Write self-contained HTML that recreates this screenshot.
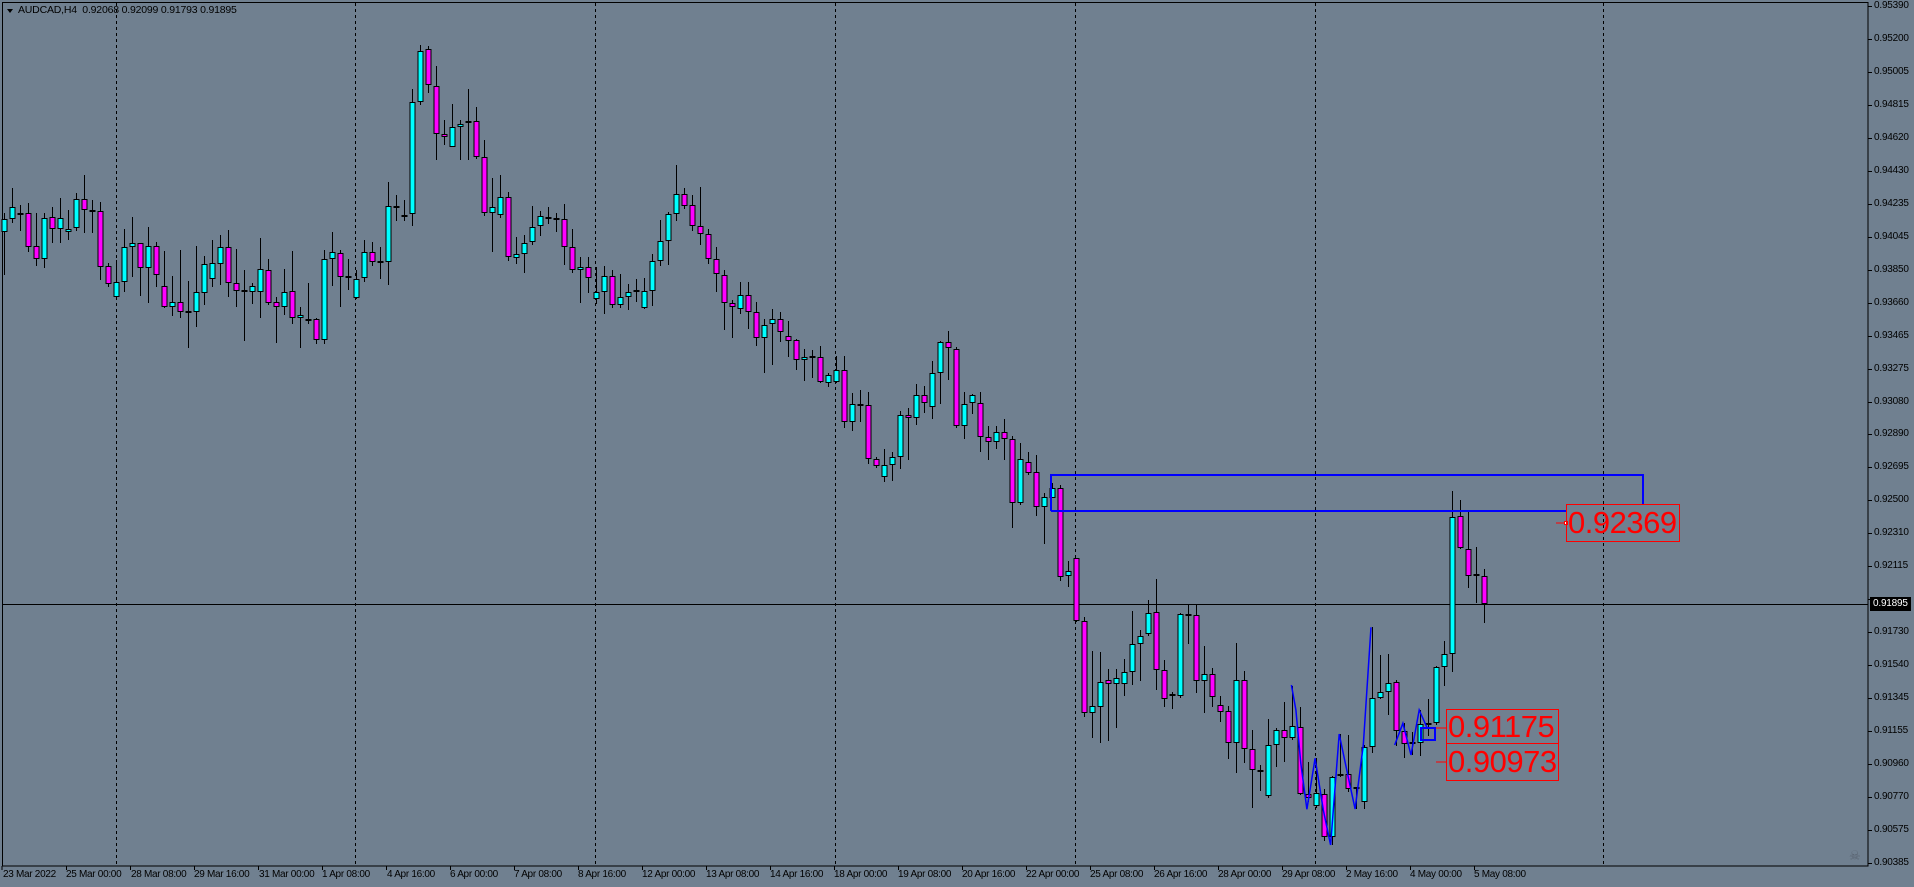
<!DOCTYPE html>
<html><head><meta charset="utf-8">
<style>
html,body{margin:0;padding:0;background:#708090;overflow:hidden}
body{width:1914px;height:887px;position:relative;font-family:"Liberation Sans",sans-serif}
svg{position:absolute;left:0;top:0}
.pl{position:absolute;left:1874px;font-size:10px;letter-spacing:-0.2px;color:#000;line-height:12px}
.tl{position:absolute;top:869px;font-size:10px;letter-spacing:-0.3px;color:#000;white-space:nowrap}
.hdr{position:absolute;left:8px;top:4px;font-size:10.5px;color:#000;white-space:nowrap;letter-spacing:-0.2px}
.box{position:absolute;border:1px solid #f00;color:#f00;font-size:31px;line-height:36px;box-sizing:border-box;letter-spacing:-0.5px;padding-left:1px;white-space:nowrap;overflow:hidden}
</style></head><body>
<svg id="s" width="1914" height="887" xmlns="http://www.w3.org/2000/svg">
<rect x="2.5" y="2.5" width="1865.5" height="863.5" fill="none" stroke="#000" stroke-width="1"/>
<g stroke="#000" stroke-width="1" stroke-dasharray="3,3">
<line x1="116.5" y1="3" x2="116.5" y2="866"/>
<line x1="355.5" y1="3" x2="355.5" y2="866"/>
<line x1="595.5" y1="3" x2="595.5" y2="866"/>
<line x1="835.5" y1="3" x2="835.5" y2="866"/>
<line x1="1075.5" y1="3" x2="1075.5" y2="866"/>
<line x1="1315.5" y1="3" x2="1315.5" y2="866"/>
<line x1="1603.5" y1="3" x2="1603.5" y2="866"/>
</g>
<line x1="2" y1="604.5" x2="1868" y2="604.5" stroke="#000" stroke-width="1"/>
<g id="c"></g>
<g fill="none" stroke="#0000ff" stroke-width="2">
<polyline points="1051,511 1051,475 1643,475 1643,504"/>
<line x1="1051" y1="511" x2="1566" y2="511"/>
<rect x="1421" y="728" width="14" height="12"/>
</g>
<g fill="none" stroke="#0000ff" stroke-width="1.5">
<polyline id="z1" points=""/>
<polyline id="z2" points=""/>
</g>
<g stroke="#f00" stroke-width="1">
<line x1="1556" y1="523" x2="1566" y2="523"/>
<line x1="1436" y1="728" x2="1446" y2="728"/>
<line x1="1436" y1="762" x2="1446" y2="762"/>
</g>
<rect x="1564.5" y="521.5" width="3" height="3" fill="#fff" stroke="#f00"/>
<path d="M7 9 L13 9 L10 13 Z" fill="#000"/>
<g id="ticks" stroke="#000"></g>
<rect x="1870" y="597" width="41" height="14" fill="#000"/>
<text x="1849" y="860" font-size="13" fill="#5a6472" font-family="DejaVu Sans,sans-serif">☠</text>
</svg>
<div class="hdr" style="left:18px">AUDCAD,H4&nbsp; 0.92068 0.92099 0.91793 0.91895</div>
<div class="box" style="left:1566px;top:504px;width:114px;height:38px">0.92369</div>
<div class="box" style="left:1446px;top:709px;width:113px;height:35px;line-height:34px">0.91175</div>
<div class="box" style="left:1446px;top:743px;width:113px;height:38px">0.90973</div>
<div id="pls"></div>
<div class="pl" style="top:598px;color:#fff;left:1873px">0.91895</div>
<div class="tl" style="left:3px">23 Mar 2022</div>
<div class="tl" style="left:66px">25 Mar 00:00</div>
<div class="tl" style="left:131px">28 Mar 08:00</div>
<div class="tl" style="left:194px">29 Mar 16:00</div>
<div class="tl" style="left:259px">31 Mar 00:00</div>
<div class="tl" style="left:322px">1 Apr 08:00</div>
<div class="tl" style="left:387px">4 Apr 16:00</div>
<div class="tl" style="left:450px">6 Apr 00:00</div>
<div class="tl" style="left:514px">7 Apr 08:00</div>
<div class="tl" style="left:578px">8 Apr 16:00</div>
<div class="tl" style="left:642px">12 Apr 00:00</div>
<div class="tl" style="left:706px">13 Apr 08:00</div>
<div class="tl" style="left:770px">14 Apr 16:00</div>
<div class="tl" style="left:834px">18 Apr 00:00</div>
<div class="tl" style="left:898px">19 Apr 08:00</div>
<div class="tl" style="left:962px">20 Apr 16:00</div>
<div class="tl" style="left:1026px">22 Apr 00:00</div>
<div class="tl" style="left:1090px">25 Apr 08:00</div>
<div class="tl" style="left:1154px">26 Apr 16:00</div>
<div class="tl" style="left:1218px">28 Apr 00:00</div>
<div class="tl" style="left:1282px">29 Apr 08:00</div>
<div class="tl" style="left:1346px">2 May 16:00</div>
<div class="tl" style="left:1410px">4 May 00:00</div>
<div class="tl" style="left:1474px">5 May 08:00</div>
<div class="pl" style="top:0px">0.95390</div><div class="pl" style="top:33px">0.95200</div><div class="pl" style="top:66px">0.95005</div><div class="pl" style="top:99px">0.94815</div><div class="pl" style="top:132px">0.94620</div><div class="pl" style="top:165px">0.94430</div><div class="pl" style="top:198px">0.94235</div><div class="pl" style="top:231px">0.94045</div><div class="pl" style="top:264px">0.93850</div><div class="pl" style="top:297px">0.93660</div><div class="pl" style="top:330px">0.93465</div><div class="pl" style="top:363px">0.93275</div><div class="pl" style="top:396px">0.93080</div><div class="pl" style="top:428px">0.92890</div><div class="pl" style="top:461px">0.92695</div><div class="pl" style="top:494px">0.92500</div><div class="pl" style="top:527px">0.92310</div><div class="pl" style="top:560px">0.92115</div><div class="pl" style="top:626px">0.91730</div><div class="pl" style="top:659px">0.91540</div><div class="pl" style="top:692px">0.91345</div><div class="pl" style="top:725px">0.91155</div><div class="pl" style="top:758px">0.90960</div><div class="pl" style="top:791px">0.90770</div><div class="pl" style="top:824px">0.90575</div><div class="pl" style="top:857px">0.90385</div>
<script>
(function(){
var A=[['c',658,697,640,825],['c',622,658,565,670],['d',641,641,615,692],['m',640,740,608,755],['m',737,778,640,798],['c',655,778,640,803],['m',652,688,620,730],['c',655,688,595,728],['c',688,697,630,720],['c',598,685,580,692],['m',598,631,525,700],['d',633,633,600,698],['m',633,800,605,840],['m',798,853,790,862],['c',845,892,780,898],['c',742,845,688,875],['c',730,742,650,830],['m',730,805,730,888],['c',739,805,682,908],['m',739,826,726,860],['m',858,922,752,925],['c',907,922,828,948],['m',907,937,750,953],['d',935,935,842,1043],['c',877,935,738,980],['c',793,880,768,915],['c',790,838,720,860],['c',742,793,705,855],['m',742,850,690,890],['m',850,872,748,920],['d',872,872,810,1022],['c',858,877,848,912],['c',808,877,715,953],['m',811,908,778,915],['m',907,920,890,1028],['c',877,920,808,945],['m',874,955,753,972],['c',946,955,922,1043],['d',960,960,850,972],['m',958,1021,955,1033],['c',778,1021,750,1033],['c',757,778,695,858],['m',760,832,750,922],['d',830,830,778,870],['c',838,895,810,898],['c',755,835,720,845],['m',755,785,727,798],['d',785,785,742,838],['c',617,785,547,855],['m',617,623,585,662],['c',646,652,600,663],['c',305,643,268,677],['c',152,305,135,315],['m',148,255,138,280],['m',257,403,198,480],['m',403,410,360,435],['c',382,440,312,442],['c',371,382,360,480],['c',362,370,268,480],['m',362,472,322,478],['m',472,640,420,648],['c',620,640,535,755],['c',590,645,525,655],['m',590,772,575,782],['c',763,775,712,792],['c',728,763,705,820],['c',680,727,618,735],['c',647,677,633,708],['m',652,658,622,672],['d',658,658,640,695],['m',658,742,612,795],['m',742,810,688,818],['c',802,810,770,910],['m',800,835,772,880],['c',875,898,800,912],['c',827,875,798,943],['m',827,915,810,925],['c',892,915,822,925],['c',877,892,852,930],['c',871,877,838,905]];
var B=[['c',424,475,385,478],['c',332,424,312,468],['c',274,333,210,348],['c',193,274,185,345],['c',133,193,45,213],['m',133,167,115,177],['m',166,227,135,242],['m',229,253,110,285],['m',253,328,237,342],['m',328,373,292,425],['m',376,460,360,540],['m',460,472,450,563],['c',436,478,397,492],['m',436,487,397,537],['m',487,565,457,587],['c',526,565,508,668],['c',508,523,477,645],['m',508,547,487,575],['m',558,572,513,620],['m',571,631,568,660],['c',622,631,598,692],['d',621,621,600,685],['m',620,697,588,700],['c',676,700,670,710],['c',660,697,618,700],['m',660,817,618,833],['c',763,817,728,842],['d',765,765,720,815],['m',766,928,727,942],['m',928,948,922,955],['c',946,980,897,995],['c',922,946,907,992],['c',796,922,783,957],['m',796,805,773,930],['c',736,805,702,825],['m',736,760,708,790],['c',670,772,633,807],['c',577,670,573,762],['m',577,595,543,690],['m',598,827,590,835],['c',763,827,727,867],['c',736,760,733,792],['m',760,862,727,907],['m',862,875,828,930],['c',845,877,828,897],['m',845,868,807,930],['m',868,1060,858,1133],['c',928,1060,880,1065],['m',937,968,905,975],['m',967,1072,915,1098],['c',1040,1072,1028,1182],['c',1015,1043,1000,1045],['m',1015,1280,1005,1292],['c',1262,1277,1233,1310]];
var C=[['m',385,572,383,575],['m',572,848,562,862],['c',828,850,662,923],['c',755,832,665,938],['m',750,763,718,932],['c',745,763,717,893],['c',725,763,688,797],['c',643,725,543,765],['c',617,643,600,752],['c',550,613,510,618],['m',547,720,447,780],['m',720,808,690,830],['c',793,798,785,838],['c',552,797,548,803],['d',555,555,523,643],['m',555,753,523,790],['c',733,753,648,848],['m',733,802,715,830],['m',826,845,797,877],['m',843,940,828,988],['c',751,940,640,1030],['m',751,958,723,1000],['m',958,1020,900,1133],['m',1020,1027,1005,1082],['c',945,1097,867,1105],['c',900,945,895,1012],['m',900,925,815,995],['c',888,925,767,930],['m',890,1092,832,1095],['m',1093,1105,995,1115],['c',1090,1128,985,1133],['m',1093,1222,1077,1232],['c',1042,1222,1038,1245],['c',1033,1038,912,1040],['m',1033,1078,915,1085],['d',1075,1075,1070,1137],['c',952,1117,945,1137],['c',805,952,592,970],['c',787,805,675,808],['c',758,787,672,855],['m',755,903,750,948],['m',903,942,880,985],['d',940,940,905,975],['c',883,940,840,978],['d',883,883,808,918],['c',712,880,708,885],['c',673,712,632,767],['c',260,673,183,725],['m',257,355,210,358],['m',357,438,243,475],['c',433,438,350,518],['m',437,522,418,578]];
var all=[];A.forEach(function(a){all.push([a[0],a[1]/3,a[2]/3,a[3]/3,a[4]/3]);});
B.forEach(function(a){all.push([a[0],150+a[1]/3,150+a[2]/3,150+a[3]/3,150+a[4]/3]);});
C.forEach(function(a){all.push([a[0],430+a[1]/3,430+a[2]/3,430+a[3]/3,430+a[4]/3]);});
var h='';
all.forEach(function(a,i){var x=4.5+8*i;var t=Math.round(a[1]),b=Math.round(a[2]);
h+='<line x1="'+x+'" y1="'+Math.round(a[3])+'" x2="'+x+'" y2="'+Math.round(a[4])+'" stroke="#000"/>';
if(a[0]=='d'){h+='<rect x="'+(x-3)+'" y="'+(t-1)+'" width="6" height="2" fill="#000"/>';}
else{var f=a[0]=='c'?'#00ffff':'#ff00ff';if(b-t<2)b=t+2;
h+='<rect x="'+(x-2.5)+'" y="'+(t+0.5)+'" width="5" height="'+(b-t-1)+'" fill="'+f+'" stroke="#000" stroke-width="1"/>';}
});
document.getElementById('c').innerHTML=h;
function cv(p){return p.map(function(q){return (1060+q[0]/2.45).toFixed(1)+','+(430+q[1]/3).toFixed(1);}).join(' ');}
document.getElementById('z1').setAttribute('points',cv([[567,765],[578,840],[590,1000],[605,1138],[625,985],[645,1140],[663,1245],[684,912],[705,1035],[723,1137],[743,945],[762,592]]));
document.getElementById('z2').setAttribute('points',cv([[820,945],[840,880],[860,975],[880,840],[900,895],[918,895]]));
var tk='';for(var k=0;k<27;k++){var y=Math.round(6+32.96*k)+0.5;tk+='<line x1="1868" y1="'+y+'" x2="1872" y2="'+y+'"/>';}
for(var j=0;j<24;j++){var xx=(j==0?2:66+64*(j-1)+0.5);tk+='<line x1="'+xx+'" y1="866" x2="'+xx+'" y2="870"/>';}
document.getElementById('ticks').innerHTML=tk;
})();
</script>
</body></html>
